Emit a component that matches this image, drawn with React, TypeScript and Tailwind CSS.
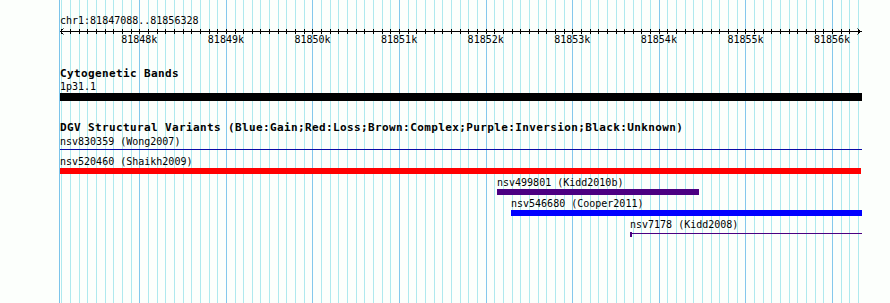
import React from "react";

const START = 81847088;
const PX0 = 60.3;
const SCALE = 0.086588;
const xOf = (bp: number) => PX0 + (bp - START) * SCALE;

const minorBps: number[] = [];
for (let bp = 81847100; bp <= 81856300; bp += 100) minorBps.push(bp);
const majorBps: number[] = [];
for (let bp = 81848000; bp <= 81856000; bp += 1000) majorBps.push(bp);

function Grid() {
  return (
    <svg
      className="absolute left-0 top-0"
      width={890}
      height={303}
      shapeRendering="crispEdges"
    >
      <line x1={59.5} x2={59.5} y1={0} y2={303} stroke="#7cc4ea" strokeWidth={1} />
      {minorBps.map((bp) => {
        const x = Math.round(xOf(bp)) + 0.5;
        const major = bp % 1000 === 0;
        return (
          <line
            key={bp}
            x1={x}
            x2={x}
            y1={0}
            y2={303}
            stroke={major ? "#84c8ec" : "#aee9ee"}
            strokeWidth={1}
          />
        );
      })}
    </svg>
  );
}

function Ruler() {
  return (
    <div className="relative h-[22px] w-[802px]">
      <svg
        className="absolute left-0 top-0"
        width={802}
        height={10}
        shapeRendering="crispEdges"
      >
        <line x1={0} x2={802} y1={4.5} y2={4.5} stroke="#000" strokeWidth={1} />
        {minorBps.map((bp) => {
          const x = Math.round(xOf(bp)) - 60 + 0.5;
          return <line key={bp} x1={x} x2={x} y1={2} y2={7} stroke="#000" strokeWidth={1} />;
        })}
        <polyline points="3.5,1.5 0.5,4.5 3.5,7.5" fill="none" stroke="#000" strokeWidth={1} shapeRendering="auto" />
        <polyline points="797.5,1.5 800.5,4.5 797.5,7.5" fill="none" stroke="#000" strokeWidth={1} shapeRendering="auto" />
      </svg>
      {majorBps.map((bp) => (
        <span
          key={bp}
          className="absolute top-[6px] w-[36px] text-center text-[10px] leading-[13px] text-black"
          style={{ left: xOf(bp) - 60 - 18 }}
        >
          {`${Math.round(bp / 1000)}k`}
        </span>
      ))}
    </div>
  );
}

type Feature = {
  name: string;
  left: number;
  width: number;
  color: string;
};

const features: Feature[] = [
  { name: "nsv520460 (Shaikh2009)", left: 0, width: 801, color: "#ff0000" },
  { name: "nsv499801 (Kidd2010b)", left: 437, width: 202, color: "#4b0082" },
  { name: "nsv546680 (Cooper2011)", left: 451, width: 351, color: "#0000ff" },
];

function BarRow({ f }: { f: Feature }) {
  return (
    <div className="flex flex-col">
      <div className="h-[13px] text-[10px] leading-[13px] whitespace-pre" style={{ marginLeft: f.left }}>
        {f.name}
      </div>
      <div className="h-[6px]" style={{ marginLeft: f.left, width: f.width, backgroundColor: f.color }} />
      <div className="h-[2px]" />
    </div>
  );
}

export default function App() {
  return (
    <div className="relative h-[303px] w-[890px] overflow-hidden bg-[#fcfffc] font-['DejaVu_Sans_Mono',monospace] text-black">
      <Grid />
      <div className="relative flex flex-col pl-[60px] pt-[14px]">
        <div className="h-[13px] text-[10px] leading-[13px] whitespace-pre">chr1:81847088..81856328</div>
        <Ruler />
        <div className="mt-[19px] h-[12px] text-[11px] font-bold leading-[12px] tracking-[0.38px] whitespace-pre">
          Cytogenetic Bands
        </div>
        <div className="h-[13px] text-[10px] leading-[13px]">1p31.1</div>
        <div className="h-[8px] w-[802px] bg-black" />
        <div className="mt-[21px] h-[12px] text-[11px] font-bold leading-[12px] tracking-[0.38px] whitespace-pre">
          DGV Structural Variants (Blue:Gain;Red:Loss;Brown:Complex;Purple:Inversion;Black:Unknown)
        </div>
        <div className="mt-[1px] h-[13px] text-[10px] leading-[13px] whitespace-pre">nsv830359 (Wong2007)</div>
        <div className="mt-[1px] mb-[5px] h-px w-[802px] bg-[#0a0aa8]" />
        {features.map((f) => (
          <BarRow key={f.name} f={f} />
        ))}
        <div className="flex flex-col">
          <div className="ml-[570px] h-[13px] text-[10px] leading-[13px] whitespace-pre">nsv7178 (Kidd2008)</div>
          <div className="ml-[570px] flex h-[6px] w-[232px] items-start">
            <div className="mt-[1px] h-[5px] w-[2px] bg-[#4b0082]" />
            <div className="mt-[2px] h-px flex-1 bg-[#4b0082]" />
          </div>
        </div>
      </div>
    </div>
  );
}
